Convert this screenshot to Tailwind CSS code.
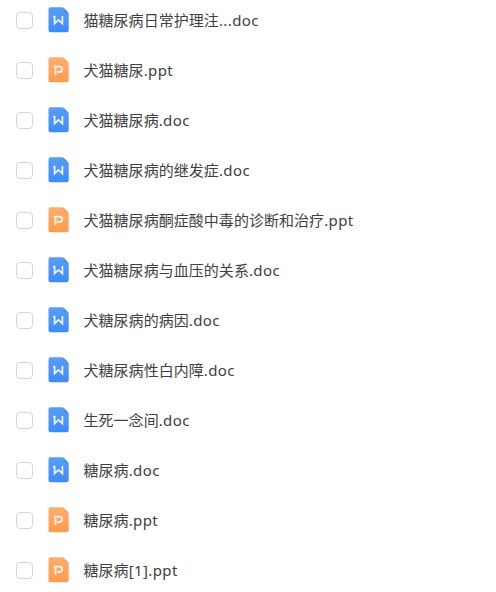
<!DOCTYPE html>
<html lang="zh-CN">
<head>
  <meta charset="UTF-8">
  <title>文件列表</title>
  <script src="https://cdn.jsdelivr.net/npm/@tailwindcss/browser@4"></script>
</head>
<body class="bg-white overflow-hidden">
  <svg class="absolute size-0">
    <defs>
      <linearGradient id="blue" x1="0" y1="0" x2="0" y2="1">
        <stop offset="0" stop-color="#5a9df8"/>
        <stop offset="1" stop-color="#3c8bfc"/>
      </linearGradient>
      <linearGradient id="orange" x1="0" y1="0" x2="0" y2="1">
        <stop offset="0" stop-color="#ffae70"/>
        <stop offset="1" stop-color="#ff9b4d"/>
      </linearGradient>
    </defs>
  </svg>

  <ul id="files" class="h-[592px] pl-4 -mt-[5px] font-['Noto_Sans','Noto_Sans_CJK_SC',sans-serif] text-[15px] tracking-[0.04px] text-[#3e3f42]"></ul>

  <template id="doc">
    <svg class="w-[21px] h-[26px] ml-[15px] shrink-0" viewBox="0 0 21 26">
      <path d="M2.500 .3H14.500a1.500 1.500 0 0 1 1 .4L20.300 5.500a1.500 1.500 0 0 1 .4 1V23.200a2 2 0 0 1-2 2H2.500a2 2 0 0 1-2-2V2.300a2 2 0 0 1 2-2Z" fill="url(#blue)"/>
      <path d="M15.500 .7L20.300 5.500H17a1.500 1.500 0 0 1-1.500-1.500Z" fill="#4a90f4"/>
      <path d="M5 9.700H6.600V16.600L10.500 12.900L14.400 16.600V9" fill="none" stroke="#eef5ff" stroke-width="1.700"/>
    </svg>
  </template>

  <template id="ppt">
    <svg class="w-[21px] h-[26px] ml-[15px] shrink-0" viewBox="0 0 21 26">
      <path d="M2.500 .3H14.500a1.500 1.500 0 0 1 1 .4L20.300 5.500a1.500 1.500 0 0 1 .4 1V23.200a2 2 0 0 1-2 2H2.500a2 2 0 0 1-2-2V2.300a2 2 0 0 1 2-2Z" fill="url(#orange)"/>
      <path d="M15.500 .7L20.300 5.500H17a1.500 1.500 0 0 1-1.500-1.500Z" fill="#fca05e"/>
      <path d="M5.600 9.600H11.500a2.700 2.700 0 0 1 0 5.400H9.300M7.500 9.600V18" fill="none" stroke="#fff3e8" stroke-width="1.800"/>
    </svg>
  </template>

  <script>
    const files = [
      ["猫糖尿病日常护理注", "...doc"],
      ["犬猫糖尿", ".ppt"],
      ["犬猫糖尿病", ".doc"],
      ["犬猫糖尿病的继发症", ".doc"],
      ["犬猫糖尿病酮症酸中毒的诊断和治疗", ".ppt"],
      ["犬猫糖尿病与血压的关系", ".doc"],
      ["犬糖尿病的病因", ".doc"],
      ["犬糖尿病性白内障", ".doc"],
      ["生死一念间", ".doc"],
      ["糖尿病", ".doc"],
      ["糖尿病", ".ppt"],
      ["糖尿病", "[1].ppt"]
    ];

    document.getElementById("files").innerHTML = files.map(([name, ext]) => `
      <li class="flex items-center h-[50px]">
        <span class="size-[17px] shrink-0 rounded-[4px] border border-[#d6d6d8] bg-white"></span>
        ${document.getElementById(ext.slice(-3)).innerHTML}
        <span class="ml-[14.5px] whitespace-nowrap">${name}<span class="tracking-[0.4px]">${ext}</span></span>
      </li>`).join("");
  </script>
</body>
</html>
